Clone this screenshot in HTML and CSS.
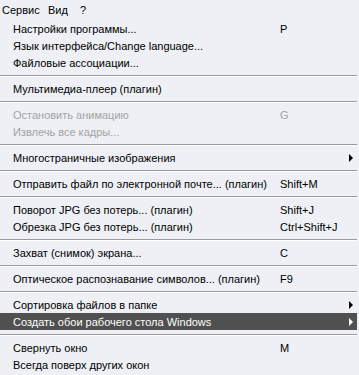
FILE: index.html
```html
<!DOCTYPE html>
<html>
<head>
<meta charset="utf-8">
<link rel="stylesheet" href="styles.css">
</head>
<body>
<div class="menubar">
  <span class="top">Сервис</span>
  <span class="top">Вид</span>
  <span class="top">?</span>
</div>
<div class="menu">
  <div class="item"><span class="label">Настройки программы...</span><span class="key">P</span></div>
  <div class="item"><span class="label">Язык интерфейса/Change language...</span><span class="key"></span></div>
  <div class="item"><span class="label">Файловые ассоциации...</span><span class="key"></span></div>
  <div class="sep"></div>
  <div class="item"><span class="label">Мультимедиа-плеер (плагин)</span><span class="key"></span></div>
  <div class="sep"></div>
  <div class="item disabled"><span class="label">Остановить анимацию</span><span class="key">G</span></div>
  <div class="item disabled"><span class="label">Извлечь все кадры...</span><span class="key"></span></div>
  <div class="sep"></div>
  <div class="item sub"><span class="label">Многостраничные изображения</span><span class="key"></span></div>
  <div class="sep"></div>
  <div class="item"><span class="label">Отправить файл по электронной почте... (плагин)</span><span class="key">Shift+M</span></div>
  <div class="sep"></div>
  <div class="item"><span class="label">Поворот JPG без потерь... (плагин)</span><span class="key">Shift+J</span></div>
  <div class="item"><span class="label">Обрезка JPG без потерь... (плагин)</span><span class="key">Ctrl+Shift+J</span></div>
  <div class="sep"></div>
  <div class="item"><span class="label">Захват (снимок) экрана...</span><span class="key">C</span></div>
  <div class="sep"></div>
  <div class="item"><span class="label">Оптическое распознавание символов... (плагин)</span><span class="key">F9</span></div>
  <div class="sep"></div>
  <div class="item sub"><span class="label">Сортировка файлов в папке</span><span class="key"></span></div>
  <div class="item sub active"><span class="label">Создать обои рабочего стола Windows</span><span class="key"></span></div>
  <div class="sep"></div>
  <div class="item"><span class="label">Свернуть окно</span><span class="key">M</span></div>
  <div class="item"><span class="label">Всегда поверх других окон</span><span class="key"></span></div>
</div>
</body>
</html>
```
FILE: styles.css
```css
html, body {
  margin: 0;
  padding: 0;
  background: #eef0f5;
}
body {
  width: 359px;
  height: 375px;
  overflow: hidden;
  font-family: "Liberation Sans", Arial, sans-serif;
  font-size: 11px;
  color: #000;
}
.menubar {
  height: 20px;
  display: grid;
  grid-template-columns: 46px 32px auto;
  align-items: center;
  padding-left: 2px;
}
.top {
  line-height: 20px;
}
.menu {
  display: flex;
  flex-direction: column;
  padding-right: 2px;
}
.item {
  position: relative;
  height: 17px;
  display: grid;
  grid-template-columns: 267px 1fr;
  align-items: center;
  padding-left: 13px;
  white-space: nowrap;
}
.disabled {
  color: #a3a3a3;
}
.sep {
  height: 9px;
  display: flex;
  flex-direction: column;
  justify-content: center;
}
.sep::before {
  content: "";
  display: block;
  height: 1px;
  background: #9a9a9a;
}
.sep::after {
  content: "";
  display: block;
  height: 1px;
  background: #ffffff;
}
.sub::after {
  content: "";
  position: absolute;
  right: 4px;
  top: 5px;
  width: 0;
  height: 0;
  border-top: 4px solid transparent;
  border-bottom: 4px solid transparent;
  border-left: 4px solid #000;
}
.active {
  background: #505050;
  color: #fff;
}
.active::after {
  border-left-color: #fff;
}
```
